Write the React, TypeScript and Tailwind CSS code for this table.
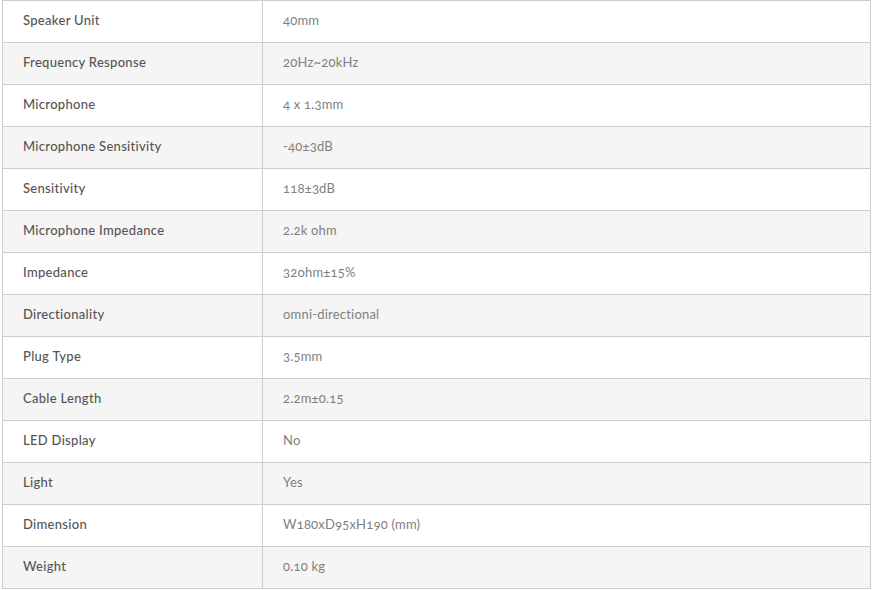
const specs: [string, string][] = [
  ["Speaker Unit", "40mm"],
  ["Frequency Response", "20Hz~20kHz"],
  ["Microphone", "4 x 1.3mm"],
  ["Microphone Sensitivity", "-40±3dB"],
  ["Sensitivity", "118±3dB"],
  ["Microphone Impedance", "2.2k ohm"],
  ["Impedance", "32ohm±15%"],
  ["Directionality", "omni-directional"],
  ["Plug Type", "3.5mm"],
  ["Cable Length", "2.2m±0.15"],
  ["LED Display", "No"],
  ["Light", "Yes"],
  ["Dimension", "W180xD95xH190 (mm)"],
  ["Weight", "0.10 kg"],
]

export default function App() {
  return (
    <div className="min-h-screen bg-white pl-[2px] font-['Lato',_'Liberation_Sans',_sans-serif] text-[13px]">
      <table className="w-[869px] border-collapse">
        <tbody>
          {specs.map(([label, value], i) => (
            <tr key={label} className={i % 2 === 1 ? "h-[42px] bg-[#f5f5f5]" : "h-[42px] bg-white"}>
              <td className="w-[260px] border border-[#cccccc] px-5 pt-0 pb-[2px] font-medium tracking-[0.3px] text-[#555555]">
                {label}
              </td>
              <td className="border border-[#cccccc] px-5 pt-0 pb-[2px] tracking-[0.2px] text-[#808080] oldstyle-nums">
                {value}
              </td>
            </tr>
          ))}
        </tbody>
      </table>
    </div>
  )
}
